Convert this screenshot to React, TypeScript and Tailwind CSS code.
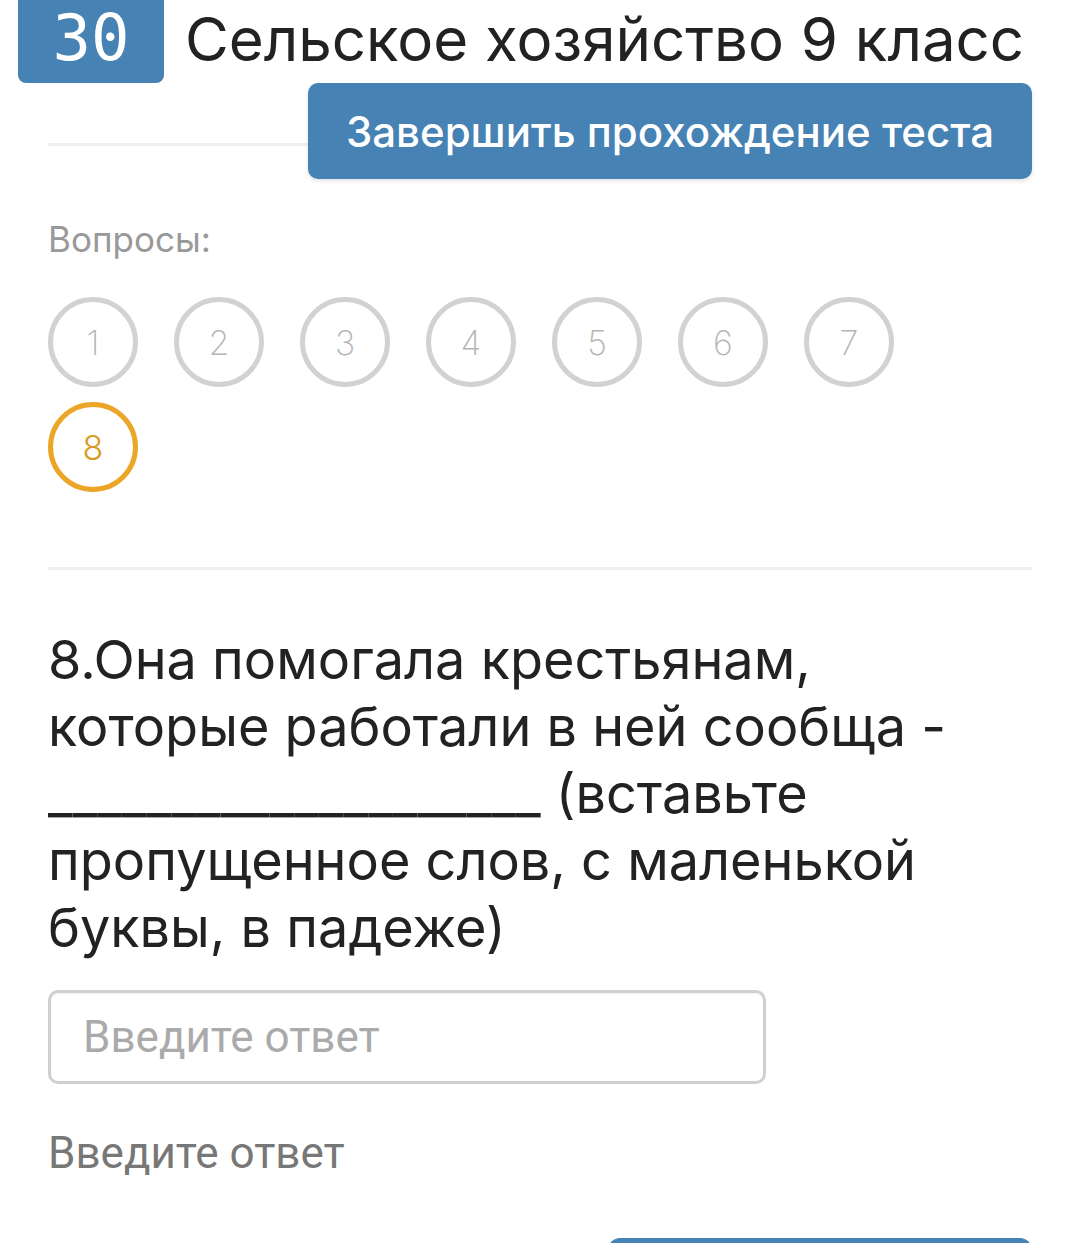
import React from "react";

const questions = [1, 2, 3, 4, 5, 6, 7, 8];

export default function App() {
  const current = 8;

  return (
    <div className="w-[1080px] h-[1243px] overflow-hidden bg-white font-['Inter',sans-serif] text-[#222]">
      {/* header */}
      <div className="flex items-start">
        <div className="ml-[18px] w-[146px] h-[83px] bg-[#4682b4] rounded-b-[8px] flex items-start justify-center pt-[4px]">
          <span className="font-['DejaVu_Sans_Mono',monospace] text-[64px] leading-[68px] text-white">30</span>
        </div>
        <h1 className="ml-[21px] text-[60px] leading-[78px] font-normal whitespace-nowrap">
          Сельское хозяйство 9 класс
        </h1>
      </div>

      <div className="flex items-start px-[48px]">
        <div className="flex-1 h-[3px] bg-[#eeeeee] mt-[60px]" />
        <button className="w-[724px] h-[96px] rounded-[10px] bg-[#4682b4] text-white text-[42px] font-medium shadow-[0_2px_4px_rgba(0,0,0,0.12)]">
          Завершить прохождение теста
        </button>
      </div>

      <div className="px-[48px]">
        <div className="mt-[38px] text-[35px] leading-[44px] text-[#999]">Вопросы:</div>

        <div className="mt-[36px] flex flex-wrap gap-x-[36px] gap-y-[15px] w-[900px]">
          {questions.map((n) => (
            <div
              key={n}
              className={
                n === current
                  ? "w-[90px] h-[90px] rounded-full border-[5px] border-[#eba628] flex items-center justify-center text-[34px] font-light text-[#d99a22]"
                  : "w-[90px] h-[90px] rounded-full border-[5px] border-[#d2d2d2] flex items-center justify-center text-[34px] font-extralight text-[#b5b5b5]"
              }
            >
              {n}
            </div>
          ))}
        </div>

        <div className="mt-[75px] h-[3px] bg-[#eeeeee]" />

        <p className="mt-[56px] text-[54px] leading-[67px]">
          8.Она помогала крестьянам,
          <br />
          которые работали в ней сообща -
          <br />
          ____________________ (вставьте
          <br />
          пропущенное слов, с маленькой
          <br />
          буквы, в падеже)
        </p>

        <input
          className="mt-[29px] block w-[718px] h-[94px] rounded-[10px] border-[3px] border-[#d0d0d0] px-[32px] text-[44px] font-['Roboto',sans-serif] placeholder:text-[#aaaaaa] outline-none shadow-[inset_0_1px_2px_rgba(0,0,0,0.06)]"
          placeholder="Введите ответ"
        />

        <div className="mt-[44px] text-[44px] leading-[50px] font-['Roboto',sans-serif] text-[#777]">Введите ответ</div>

        <div className="mt-[60px] flex justify-end">
          <div className="w-[424px] h-[60px] rounded-t-[12px] bg-[#4682b4]" />
        </div>
      </div>
    </div>
  );
}
